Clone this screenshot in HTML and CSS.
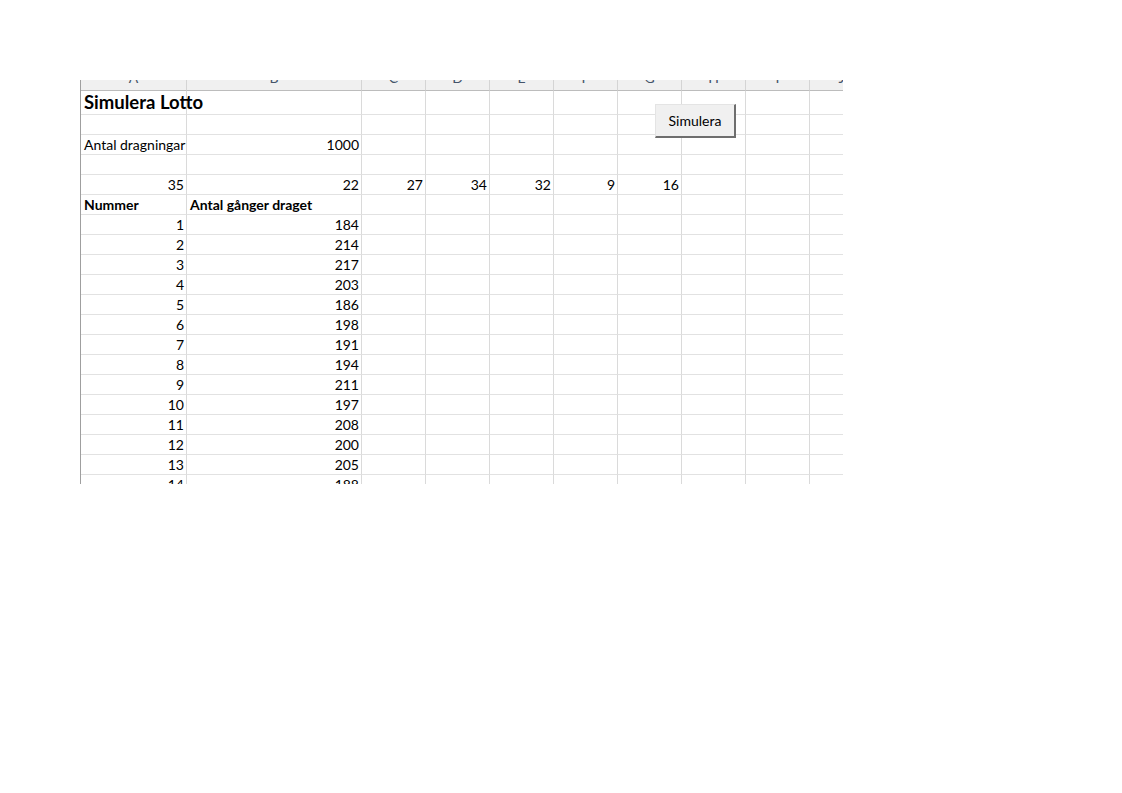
FILE: index.html
```html
<!DOCTYPE html>
<html lang="sv">
<head>
  <meta charset="UTF-8">
  <title>Simulera Lotto</title>
  <link rel="stylesheet" href="styles.css">
</head>
<body>

  <div class="sheet">

    <div class="row row-head">
      <div class="cell">A</div>
      <div class="cell">B</div>
      <div class="cell">C</div>
      <div class="cell">D</div>
      <div class="cell">E</div>
      <div class="cell">F</div>
      <div class="cell">G</div>
      <div class="cell">H</div>
      <div class="cell">I</div>
      <div class="cell">J</div>
    </div>

    <div class="row row-title">
      <div class="cell title">Simulera Lotto</div>
      <div class="cell"></div>
      <div class="cell"></div><div class="cell"></div><div class="cell"></div><div class="cell"></div>
      <div class="cell"></div><div class="cell"></div><div class="cell"></div><div class="cell"></div>
    </div>

    <div class="row">
      <div class="cell"></div><div class="cell"></div>
      <div class="cell"></div><div class="cell"></div><div class="cell"></div><div class="cell"></div>
      <div class="cell"></div><div class="cell"></div><div class="cell"></div><div class="cell"></div>
    </div>

    <div class="row">
      <div class="cell">Antal dragningar</div>
      <div class="cell num">1000</div>
      <div class="cell"></div><div class="cell"></div><div class="cell"></div><div class="cell"></div>
      <div class="cell"></div><div class="cell"></div><div class="cell"></div><div class="cell"></div>
    </div>

    <div class="row">
      <div class="cell"></div><div class="cell"></div>
      <div class="cell"></div><div class="cell"></div><div class="cell"></div><div class="cell"></div>
      <div class="cell"></div><div class="cell"></div><div class="cell"></div><div class="cell"></div>
    </div>

    <div class="row">
      <div class="cell num">35</div>
      <div class="cell num">22</div>
      <div class="cell num">27</div>
      <div class="cell num">34</div>
      <div class="cell num">32</div>
      <div class="cell num">9</div>
      <div class="cell num">16</div>
      <div class="cell"></div><div class="cell"></div><div class="cell"></div>
    </div>

    <div class="row">
      <div class="cell bold">Nummer</div>
      <div class="cell bold">Antal gånger draget</div>
      <div class="cell"></div><div class="cell"></div><div class="cell"></div><div class="cell"></div>
      <div class="cell"></div><div class="cell"></div><div class="cell"></div><div class="cell"></div>
    </div>

    <div id="results"></div>

    <button class="macro-btn" type="button">Simulera</button>
  </div>

  <script src="main.js"></script>
</body>
</html>
```

FILE: styles.css
```css
html,
body {
  margin: 0;
  padding: 0;
  background: #fff
}

body {
  font-family: Lato, "Open Sans", Arial, sans-serif;
  font-size: 14px;
  color: #000
}

/* visible part of the worksheet */
.sheet {
  position: relative;
  margin: 80px 0 0 80px;
  width: 762px;
  height: 404px;
  overflow: hidden;
  border-left: 1px solid #9f9f9f
}

.row {
  display: grid;
  grid-template-columns: 106px 175px repeat(8, 64px);
  height: 20px
}

.cell {
  box-sizing: border-box;
  border-right: 1px solid #dadada;
  border-bottom: 1px solid #e2e2e2;
  padding: 0 2px 1px 3px;
  display: flex;
  align-items: flex-end;
  line-height: 17px;
  white-space: nowrap;
  overflow: hidden
}

.num {
  justify-content: flex-end
}

.bold {
  font-weight: bold
}

/* column letters, cut by the top edge */
.row-head {
  height: 20px;
  margin-top: -9px;
  background: #f0f0f0
}

.row-head .cell {
  justify-content: center;
  align-items: flex-start;
  border-right-color: #d4d4d4;
  border-bottom: 1px solid #bcbcbc;
  color: #44546a;
  font-size: 14px;
  line-height: 14px;
  padding: 0
}

.row-title {
  height: 24px
}

.title {
  font-size: 18.5px;
  font-weight: bold;
  line-height: 21px;
  overflow: visible
}

.macro-btn {
  position: absolute;
  left: 574px;
  top: 24px;
  width: 81px;
  height: 34px;
  box-sizing: border-box;
  background: #f0f0f0;
  border: 1px solid #e4e4e4;
  border-right: 2px solid #6e6e6e;
  border-bottom: 2px solid #6e6e6e;
  font-family: Lato, "Open Sans", Arial, sans-serif;
  font-size: 14px;
  color: #000;
  padding: 0
}
```

FILE: main.js
```js
// times each number has been drawn
var counts = [184, 214, 217, 203, 186, 198, 191, 194, 211, 197, 208, 200, 205, 188];

var results = document.getElementById('results');

counts.forEach(function (n, i) {
  var row = document.createElement('div');
  row.className = 'row';
  var html = '<div class="cell num">' + (i + 1) + '</div>' +
    '<div class="cell num">' + n + '</div>';
  for (var c = 0; c < 8; c++) {
    html += '<div class="cell"></div>';
  }
  row.innerHTML = html;
  results.appendChild(row);
});
```
